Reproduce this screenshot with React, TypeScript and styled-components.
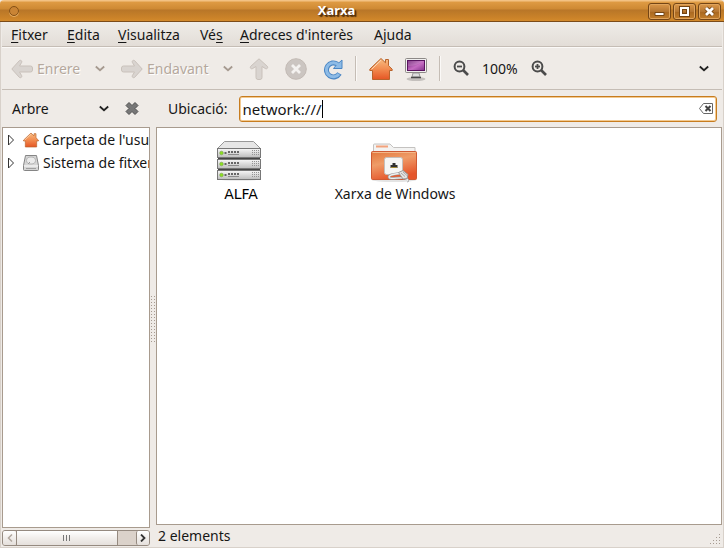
import React from "react";
import styled, { createGlobalStyle, css } from "styled-components";

const GlobalStyle = createGlobalStyle`
  *, *::before, *::after { box-sizing: border-box; }
  body {
    margin: 0;
    color: #161616;
    background: #efebe7;
    font-family: "Noto Sans", "Open Sans", sans-serif;
    font-size: 14px;
    line-height: 20px;
  }
  button, input { font: inherit; color: inherit; }
  svg { display: block; flex: none; }
`;

const plainButton = css`
  display: flex;
  align-items: center;
  padding: 0;
  border: 0;
  background: none;
  white-space: nowrap;
`;

const Window = styled.div`
  display: flex;
  flex-direction: column;
  min-height: 100vh;
  background: #efebe7;
  overflow: hidden;
`;

const TitleBar = styled.header`
  display: grid;
  grid-template-columns: 76px 1fr 76px;
  align-items: center;
  height: 22px;
  padding-right: 3px;
  border-bottom: 1px solid #7b4b18;
  border-radius: 4px 4px 0 0;
  background: linear-gradient(#f3c283 0, #f3c283 1px, #df9b43 2px, #ce8933 9px, #b87628 10px, #cb8329 18px, #d38a2c 21px);
`;

const Title = styled.h1`
  margin: 0;
  padding: 0 48px 2px 0;
  color: #fff;
  font-size: 13px;
  line-height: 20px;
  font-weight: 700;
  text-align: center;
  text-shadow: 1px 1px 1px #4b2b08, 2px 2px 1px #5a350e;
`;

const WindowMenu = styled.button`
  width: 10px;
  height: 10px;
  margin: 0 0 1px 9px;
  padding: 0;
  border: 1px solid #855015;
  border-radius: 50%;
  background: #c98435;
  box-shadow: 0 1px 0 #e7ad62;
`;

const WindowButtons = styled.div`
  display: flex;
  justify-content: flex-end;
  gap: 2px;
`;

const WindowButton = styled.button`
  ${plainButton}
  justify-content: center;
  width: 23px;
  height: 17px;
  border: 1px solid #744515;
  border-radius: 3px;
  background: linear-gradient(#dc9849, #b57632 50%, #a96720 51%, #c27e2c);
  box-shadow: inset 0 0 0 1px #e0a45d;
`;

const Frame = styled.div`
  display: flex;
  flex: 1;
  flex-direction: column;
  border: solid #d8d1ca;
  border-width: 0 1px 1px;
  padding: 0 1px;
`;

const MenuBar = styled.nav`
  display: flex;
  gap: 17px;
  height: 25px;
  padding: 3px 9px 1px;
  border-bottom: 1px solid #c5bdb5;
  background: linear-gradient(#efece8, #e3ddd7);
`;

const MenuItem = styled.button<{ $width: number }>`
  ${plainButton}
  width: ${(p) => p.$width}px;
  u { text-decoration-thickness: 1px; text-underline-offset: 2px; }
`;

const ToolBar = styled.div`
  display: flex;
  align-items: center;
  height: 43px;
  padding: 0 13px 0 9px;
  border-top: 1px solid #fbf9f7;
  border-bottom: 1px solid #c5bdb5;
`;

const ToolGroup = styled.div<{ $gap: number }>`
  display: flex;
  align-items: center;
  gap: ${(p) => p.$gap}px;
`;

const ToolButton = styled.button<{ $width?: number }>`
  ${plainButton}
  gap: 4px;
  width: ${(p) => (p.$width ? `${p.$width}px` : "auto")};
  &:disabled { color: #b5a89d; text-shadow: 1px 1px 0 #fff; }
`;

const Separator = styled.span`
  width: 2px;
  height: 25px;
  margin: 0 12px;
  border-left: 1px solid #c5bdb5;
  border-right: 1px solid #fbf9f7;
`;

const Spacer = styled.span`
  flex: 1;
`;

const Body = styled.div`
  display: grid;
  flex: 1;
  grid-template-columns: 148px 6px minmax(0, 1fr);
`;

const Column = styled.div`
  display: flex;
  flex-direction: column;
  min-width: 0;
`;

const PaneHeader = styled.div`
  display: flex;
  align-items: center;
  height: 37px;
  padding: 0 5px 0 12px;
  gap: 11px;
`;

const SideHeader = styled(PaneHeader)`
  padding: 0 11px 0 10px;
  gap: 16px;
`;

const SideSelect = styled.button`
  ${plainButton}
  flex: 1;
  justify-content: space-between;
`;

const LocationField = styled.label`
  display: flex;
  flex: 1;
  align-items: center;
  height: 26px;
  padding: 0 3px;
  border: 1px solid #c77c1f;
  border-radius: 3px;
  background: #fff;
  box-shadow: inset 0 0 0 1px #f3ca91;
  cursor: text;
`;

const LocationInput = styled.input`
  field-sizing: content;
  padding: 0;
  border: 0;
  outline: 0;
  background: none;
  font-size: 15px;
  caret-color: transparent;
`;

const Caret = styled.span`
  width: 1px;
  height: 18px;
  background: #000;
`;

const Pane = styled.div`
  flex: 1;
  border: 1px solid #a89b8e;
  background: #fff;
  overflow: hidden;
`;

const Tree = styled.ul`
  margin: 0;
  padding: 0 0 0 4px;
  list-style: none;
`;

const TreeRow = styled.li`
  display: flex;
  align-items: center;
  height: 23px;
  white-space: nowrap;
`;

const Expander = styled.button`
  ${plainButton}
  flex: none;
  width: 16px;
`;

const TreeLabel = styled.button`
  ${plainButton}
  gap: 4px;
`;

const Splitter = styled.div`
  display: flex;
  align-items: center;
  justify-content: center;
`;

const ScrollBar = styled.div`
  display: flex;
  height: 16px;
  margin: 2px 0 1px;
  border: 1px solid #958a80;
  border-radius: 3px;
  background: #dbd2ca;
`;

const ScrollPart = styled.button<{ $thumb?: boolean }>`
  ${plainButton}
  justify-content: center;
  width: ${(p) => (p.$thumb ? "102px" : "13px")};
  background: linear-gradient(#fff, #f1eeeb 50%, #e5e0dc);
  color: #333;
  border: solid #958a80;
  border-width: 0 ${(p) => (p.$thumb ? "1px" : "0")};
  border-radius: ${(p) => (p.$thumb ? "0" : "2px")};
  &:last-child { border-left-width: 1px; }
  &:disabled { color: #b0a79e; }
`;

const IconGrid = styled.div`
  display: grid;
  grid-template-columns: repeat(auto-fill, 154px);
  padding: 8px 7px;
`;

const IconItem = styled.button<{ $host?: boolean }>`
  ${plainButton}
  flex-direction: column;
  ${(p) => p.$host && css`
    color: #000;
    font-family: "DejaVu Sans", sans-serif;
  `}
`;

const StatusBar = styled.footer`
  display: flex;
  align-items: center;
  justify-content: space-between;
  height: 22px;
  padding-left: 2px;
`;

const Grip = styled.span`
  align-self: flex-end;
  padding-bottom: 2px;
`;

function Chevron({ color = "#222" }: { color?: string }) {
  return (
    <svg width="10" height="8" viewBox="0 0 10 8" fill="none" stroke={color} strokeWidth="1.8">
      <path d="M.8 1.5 5 5.2 9.2 1.5" />
    </svg>
  );
}

function Arrow({ forward }: { forward?: boolean }) {
  return (
    <svg width="22" height="20" viewBox="0 0 22 20">
      <path
        transform={forward ? "translate(22 0) scale(-1 1)" : undefined}
        d="M8.500 1.500.8 10l7.700 8.500c1.400.7 2.700-.5 2.200-1.800L8.500 13h11a2 2 0 0 0 2-2V9a2 2 0 0 0-2-2h-11l2.200-3.700c.5-1.300-.8-2.500-2.200-1.800Z"
        fill="#d9d4d0"
        stroke="#c9c1bb"
      />
    </svg>
  );
}

function UpArrow() {
  return (
    <svg width="20" height="22" viewBox="0 0 20 22">
      <path
        d="M10 .8 1.500 8.500c-.7 1.400.5 2.700 1.800 2.200L7 8.500v11a2 2 0 0 0 2 2h2a2 2 0 0 0 2-2v-11l3.700 2.200c1.300.5 2.500-.8 1.800-2.200Z"
        fill="#d9d4d0"
        stroke="#c9c1bb"
      />
    </svg>
  );
}

function StopIcon() {
  return (
    <svg width="22" height="22" viewBox="0 0 22 22">
      <circle cx="11" cy="11" r="10.300" fill="#cbc5c1" stroke="#c2bab4" />
      <path d="m7 7 8 8m0-8-8 8" stroke="#f4f2f0" strokeWidth="2.800" />
    </svg>
  );
}

function ReloadIcon() {
  return (
    <svg width="20" height="22" viewBox="0 0 20 22" fill="none">
      <path d="M14.500 6.200A7 7 0 1 0 16.500 15.500" stroke="#4a86c4" strokeWidth="5" />
      <path d="M19 2v8.500h-8.500l2.500-3Z" fill="#8dbbe6" stroke="#4a86c4" strokeLinejoin="round" />
      <path d="M15.500 7A7 7 0 1 0 16 16" stroke="#8dbbe6" strokeWidth="3" />
    </svg>
  );
}

function HomeIcon({ size }: { size: number }) {
  return (
    <svg width={size} height={size} viewBox="0 0 24 24">
      <defs>
        <linearGradient id="homeFill" x2="0" y2="1">
          <stop stopColor="#f8bd82" />
          <stop offset=".5" stopColor="#f28c50" />
          <stop offset="1" stopColor="#e55624" />
        </linearGradient>
      </defs>
      <path
        d="M12 1.500.8 12.200V13.500h2.700v9h17v-9h2.700v-1.300L19.500 8.700V2.500h-3v3.300Z"
        fill="url(#homeFill)"
        stroke="#b9642c"
        strokeLinejoin="round"
      />
      <path d="M12 3.200 2.500 12.400" stroke="#fbd9b8" fill="none" />
    </svg>
  );
}

function ComputerIcon() {
  return (
    <svg width="22" height="24" viewBox="0 0 22 24">
      <defs>
        <linearGradient id="screenFill" x2="1" y2="1">
          <stop stopColor="#6c1c72" />
          <stop offset=".55" stopColor="#c56cc2" />
          <stop offset="1" stopColor="#82308a" />
        </linearGradient>
      </defs>
      <ellipse cx="11" cy="22" rx="9.500" ry="2" fill="#c4c0bd" />
      <path d="M8 16h6l1 4H7Z" fill="#ddd" stroke="#999" />
      <path d="M6 20.500h10" stroke="#4a4a4a" strokeWidth="1.500" />
      <rect x=".5" y="1.500" width="21" height="14" rx="1" fill="#f0efee" stroke="#8d8987" />
      <rect x="2.500" y="3.500" width="17" height="10" fill="url(#screenFill)" stroke="#59135f" />
      <path d="M3 9c6 0 11-2 16-5H3Z" fill="#fff" opacity=".15" />
    </svg>
  );
}

function ZoomIcon({ plus }: { plus?: boolean }) {
  return (
    <svg width="16" height="18" viewBox="0 0 16 18" fill="none" stroke="#4b4b4b">
      <circle cx="6.500" cy="6.500" r="4.900" strokeWidth="2" />
      <path d="m10 10 5 5" strokeWidth="2.600" />
      <path d="M4 6.500h5" strokeWidth="1.800" />
      {plus && <path d="M6.500 4v5" strokeWidth="1.800" />}
    </svg>
  );
}

function CloseIcon() {
  return (
    <svg width="14" height="16" viewBox="0 0 14 16">
      <path d="M4 1.500 7 4.500l3-3L13 4.500l-3 3 3 3-3 3-3-3-3 3-3-3 3-3-3-3Z" fill="#777" stroke="#505050" />
    </svg>
  );
}

function ClearIcon() {
  return (
    <svg width="14" height="11" viewBox="0 0 14 11" fill="none" stroke="#666">
      <path d="M4.500.5h9v10h-9l-4-5Z" />
      <path d="m6.500 3 5 5m0-5-5 5" stroke="#444" strokeWidth="2" />
    </svg>
  );
}

function DriveIcon() {
  return (
    <svg width="16" height="16" viewBox="0 0 16 16">
      <path d="M2.500.5h11l2 10v4a1 1 0 0 1-1 1h-13a1 1 0 0 1-1-1v-4Z" fill="#d5d5d5" stroke="#858585" />
      <ellipse cx="8" cy="5.500" rx="4.500" ry="3.500" fill="#ebebeb" stroke="#b5b5b5" />
      <path d="M1 11h14" stroke="#fff" />
      <path d="M3 13.500h10" stroke="#a0a0a0" />
      <path d="m5 9 2-2" stroke="#999" />
    </svg>
  );
}

function ServerIcon() {
  return (
    <svg width="48" height="48" viewBox="2 0 48 48">
      <defs>
        <linearGradient id="rackFill" x2="0" y2="1">
          <stop stopColor="#f8f8f8" />
          <stop offset="1" stopColor="#bcbcbc" />
        </linearGradient>
      </defs>
      <ellipse cx="24" cy="43" rx="21" ry="2" fill="#ececec" />
      <path d="M2.500 12.500 9.500 5.500h29l7 7Z" fill="#e6e6e6" stroke="#989898" />
      {[12, 23, 34].map((y) => (
        <g key={y}>
          <rect x="2.500" y={y + 0.5} width="43" height="9" fill="url(#rackFill)" stroke="#777" />
          {y < 34 && <path d={`M3 ${y + 10.5}h42`} stroke="#454545" />}
          <circle cx="6.500" cy={y + 5} r="1.800" fill="#8be01e" stroke="#7a9e52" strokeWidth=".6" />
          <path d={`M9.500 ${y + 5}h2M13 ${y + 4}h11`} stroke="#666" strokeWidth="2" strokeDasharray="2 1" />
          <path d={`M13 ${y + 6.5}h11`} stroke="#8c8c8c" />
          <path d={`M37 ${y + 2.5}h7M37 ${y + 4.5}h7M37 ${y + 6.5}h7`} stroke="#949494" strokeDasharray="1 1" />
        </g>
      ))}
    </svg>
  );
}

function NetworkFolderIcon() {
  return (
    <svg width="48" height="48" viewBox="1 0 48 48">
      <defs>
        <linearGradient id="folderFill" x2=".4" y2="1">
          <stop stopColor="#e2763a" />
          <stop offset=".45" stopColor="#ef9c68" />
          <stop offset="1" stopColor="#e5562b" />
        </linearGradient>
      </defs>
      <ellipse cx="24" cy="44" rx="22" ry="2" fill="#e4e4e4" />
      <path d="M3.500 20V9a1 1 0 0 1 1-1h15.500l3.500 3.500h21.500V20Z" fill="#f3f3f2" stroke="#c4c2c0" />
      <path d="M6 10.500h12" stroke="#f3a27c" strokeWidth="2" />
      <rect x="1.500" y="15.500" width="45" height="28" rx="1" fill="url(#folderFill)" stroke="#cf5a33" />
      <path d="M2.500 16.500h43" stroke="#f4b98b" />
      <rect x="14.500" y="21.500" width="18" height="17" rx="2" fill="#f6f6f5" stroke="#c4c0bd" />
      <path d="M20.500 32v-3h2v-2h3v2h2v3Z" fill="#303030" />
      <path d="M21 31.500h6" stroke="#a58c35" />
      <path d="M31 37c-6 1.500-12 1-12 4s10 0 15 1 4 3 3 3" fill="none" stroke="#999" strokeWidth="2.600" />
      <path d="M31 37c-6 1.500-12 1-12 4s10 0 15 1 4 3 3 3" fill="none" stroke="#f0f0ef" strokeWidth="1.300" />
      <path d="m28.500 36.500 4.500-2 5 4-1 4-4 .5Z" fill="#e5e5e4" stroke="#9b9997" />
      <path d="m31 37 4 3.500M33 36l4 3.500" stroke="#aaa" />
    </svg>
  );
}

const MENUS = [
  { before: "", key: "F", after: "itxer", width: 39 },
  { before: "", key: "E", after: "dita", width: 34 },
  { before: "", key: "V", after: "isualitza", width: 65 },
  { before: "Vé", key: "s", after: "", width: 23 },
  { before: "", key: "A", after: "dreces d'interès", width: 117 },
  { before: "A", key: "", after: "juda", width: 38 },
];

export default function App() {
  const [location, setLocation] = React.useState("network:///");
  return (
    <>
      <GlobalStyle />
      <Window>
        <TitleBar>
          <WindowMenu aria-label="Menú de la finestra" />
          <Title>Xarxa</Title>
          <WindowButtons>
            <WindowButton aria-label="Minimitza">
              <svg width="11" height="11" viewBox="0 0 11 11">
                <path d="M1 6.500h9v3H1Z" fill="#fff" stroke="#744515" />
              </svg>
            </WindowButton>
            <WindowButton aria-label="Maximitza">
              <svg width="11" height="11" viewBox="0 0 11 11" fill="none">
                <path d="M2 2h7v7H2Z" stroke="#744515" strokeWidth="4" />
                <path d="M2 2h7v7H2Z" stroke="#fff" strokeWidth="2" />
              </svg>
            </WindowButton>
            <WindowButton aria-label="Tanca">
              <svg width="11" height="11" viewBox="0 0 11 11">
                <path d="m2 2 7 7m0-7-7 7" stroke="#744515" strokeWidth="4.500" />
                <path d="m2 2 7 7m0-7-7 7" stroke="#fff" strokeWidth="2.800" />
              </svg>
            </WindowButton>
          </WindowButtons>
        </TitleBar>
        <Frame>
          <MenuBar>
            {MENUS.map((m) => (
              <MenuItem key={m.after + m.before} $width={m.width}>
                <span>{m.before}{m.key && <u>{m.key}</u>}{m.after}</span>
              </MenuItem>
            ))}
          </MenuBar>
          <ToolBar>
            <ToolGroup $gap={16}>
              <ToolButton disabled $width={68}><Arrow />Enrere</ToolButton>
              <ToolButton disabled aria-label="Historial enrere"><Chevron color="#a69a90" /></ToolButton>
              <ToolButton disabled $width={86}><Arrow forward />Endavant</ToolButton>
              <ToolButton disabled aria-label="Historial endavant"><Chevron color="#a69a90" /></ToolButton>
              <ToolButton disabled aria-label="Amunt"><UpArrow /></ToolButton>
              <ToolButton disabled aria-label="Atura"><StopIcon /></ToolButton>
              <ToolButton aria-label="Actualitza"><ReloadIcon /></ToolButton>
            </ToolGroup>
            <Separator />
            <ToolGroup $gap={12}>
              <ToolButton aria-label="Carpeta de l'usuari"><HomeIcon size={24} /></ToolButton>
              <ToolButton aria-label="Ordinador"><ComputerIcon /></ToolButton>
            </ToolGroup>
            <Separator />
            <ToolGroup $gap={12}>
              <ToolButton $width={17} aria-label="Redueix"><ZoomIcon /></ToolButton>
              <ToolButton $width={37}>100%</ToolButton>
              <ToolButton aria-label="Amplia"><ZoomIcon plus /></ToolButton>
            </ToolGroup>
            <Spacer />
            <ToolButton aria-label="Més opcions"><Chevron /></ToolButton>
          </ToolBar>
          <Body>
            <Column>
              <SideHeader>
                <SideSelect>Arbre<Chevron /></SideSelect>
                <ToolButton aria-label="Tanca la barra lateral"><CloseIcon /></ToolButton>
              </SideHeader>
              <Pane>
                <Tree>
                  {["Carpeta de l'usuari", "Sistema de fitxers"].map((name, i) => (
                    <TreeRow key={name}>
                      <Expander aria-label={`Expandeix ${name}`}>
                        <svg width="8" height="12" viewBox="0 0 8 12">
                          <path d="M1.500 1v10l5-5Z" fill="#fff" stroke="#333" />
                        </svg>
                      </Expander>
                      <TreeLabel>{i === 0 ? <HomeIcon size={16} /> : <DriveIcon />}{name}</TreeLabel>
                    </TreeRow>
                  ))}
                </Tree>
              </Pane>
              <ScrollBar>
                <ScrollPart disabled aria-label="Desplaça a l'esquerra">
                  <svg width="6" height="8" viewBox="0 0 6 8" fill="none" stroke="currentColor" strokeWidth="1.500"><path d="M5 .5 1.500 4 5 7.500" /></svg>
                </ScrollPart>
                <ScrollPart $thumb aria-label="Posició">
                  <svg width="8" height="6" viewBox="0 0 8 6" stroke="#777"><path d="M.5 0v6M3.500 0v6M6.500 0v6" /></svg>
                </ScrollPart>
                <Spacer />
                <ScrollPart aria-label="Desplaça a la dreta">
                  <svg width="6" height="8" viewBox="0 0 6 8" fill="none" stroke="currentColor" strokeWidth="1.800"><path d="M1 .5 4.500 4 1 7.500" /></svg>
                </ScrollPart>
              </ScrollBar>
            </Column>
            <Splitter>
              <svg width="6" height="48" viewBox="0 0 6 48">
                <path d="M1.500 1v47M4.500 1v47" stroke="#a69b92" strokeDasharray="1 2" />
              </svg>
            </Splitter>
            <Column>
              <PaneHeader>
                <label htmlFor="location">Ubicació:</label>
                <LocationField>
                  <LocationInput id="location" value={location} onChange={(e) => setLocation(e.target.value)} />
                  <Caret />
                  <Spacer />
                  <ToolButton aria-label="Esborra"><ClearIcon /></ToolButton>
                </LocationField>
              </PaneHeader>
              <Pane>
                <IconGrid>
                  <IconItem $host><ServerIcon />ALFA</IconItem>
                  <IconItem><NetworkFolderIcon />Xarxa de Windows</IconItem>
                </IconGrid>
              </Pane>
              <StatusBar>
                2 elements
                <Grip>
                  <svg width="12" height="12" viewBox="0 0 12 12" stroke="#a69b92">
                    <path d="M9 1.500h1M6 4.500h1M9 4.500h1M3 7.500h1M6 7.500h1M9 7.500h1M0 10.500h1M3 10.500h1M6 10.500h1M9 10.500h1" />
                  </svg>
                </Grip>
              </StatusBar>
            </Column>
          </Body>
        </Frame>
      </Window>
    </>
  );
}
